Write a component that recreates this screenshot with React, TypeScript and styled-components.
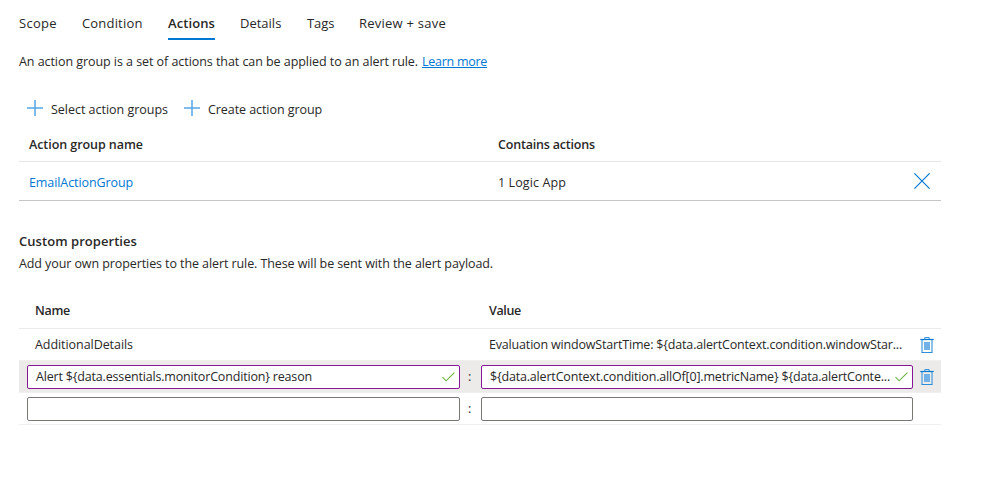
import React from 'react';
import styled, { createGlobalStyle } from 'styled-components';

const GlobalStyle = createGlobalStyle`
  * { box-sizing: border-box; }
  body {
    margin: 0;
    background: #fff;
    color: #292827;
    font: 12.5px/18px 'Open Sans', 'Noto Sans', sans-serif;
  }
`;

const Page = styled.main`
  width: 922px;
  margin-left: 19px;
  padding-top: 11px;
`;

const Text = styled.span<{ $spacing?: number }>`
  letter-spacing: ${({ $spacing = 0 }) => $spacing}px;
  white-space: pre;
`;

const Tabs = styled.nav`
  display: flex;
  height: 29px;
`;

const Tab = styled.button<{ $active?: boolean; $width: number; $spacing: number }>`
  width: ${({ $width }) => $width}px;
  margin: 0 25px 0 0;
  padding: 0 0 3px;
  border: 0;
  border-bottom: 2px solid ${({ $active }) => ($active ? '#0078d4' : 'transparent')};
  background: none;
  color: inherit;
  font: ${({ $active }) => ($active ? 600 : 400)} 13px/24px 'Open Sans', sans-serif;
  letter-spacing: ${({ $spacing }) => $spacing}px;
  text-align: left;
  white-space: nowrap;
`;

const Intro = styled.p`
  margin: 13px 0 0;
  display: flex;
  gap: 4px;
`;

const Link = styled.a<{ $spacing: number; $underline?: boolean }>`
  color: #0078d4;
  letter-spacing: ${({ $spacing }) => $spacing}px;
  text-decoration: ${({ $underline }) => ($underline ? 'underline' : 'none')};
  text-underline-offset: 1px;
`;

const Toolbar = styled.div`
  display: flex;
  gap: 16px;
  margin-top: 29px;
  padding-left: 8px;
`;

const Command = styled.button`
  display: flex;
  gap: 8px;
  padding: 0;
  border: 0;
  background: none;
  color: inherit;
  font: inherit;
`;

const CommandLabel = styled(Text)`
  padding-top: 1px;
`;

const GroupRow = styled.div<{ $header?: boolean }>`
  display: grid;
  grid-template-columns: 469px 1fr 16px;
  align-items: center;
  height: ${({ $header }) => ($header ? 33 : 39)}px;
  margin-top: ${({ $header }) => ($header ? 10 : 0)}px;
  padding: ${({ $header }) => ($header ? '0 11px 0 10px' : '4px 11px 0 10px')};
  border-bottom: 1px solid ${({ $header }) => ($header ? '#e6e6e6' : '#c8c6c4')};
  font-weight: ${({ $header }) => ($header ? 600 : 400)};
`;

const IconButton = styled.button`
  display: flex;
  padding: 0;
  border: 0;
  background: none;
`;

const RemoveButton = styled(IconButton)`
  margin-top: -4px;
`;

const Heading = styled.h2`
  margin: 31px 0 0;
  font-size: 13px;
  font-weight: 600;
  line-height: 18px;
`;

const Description = styled.p`
  margin: 5px 0 0;
`;

const PropertyHeader = styled.div`
  display: grid;
  grid-template-columns: 454px 1fr;
  align-items: center;
  height: 36px;
  margin-top: 20px;
  padding-left: 16px;
  border-bottom: 1px solid #eaeaea;
  font-weight: 600;
`;

const PropertyRow = styled.div<{ $selected?: boolean }>`
  display: grid;
  grid-template-columns: 433px 21px 432px 1fr;
  align-items: center;
  height: 32px;
  padding-left: 8px;
  border-bottom: 1px solid #f0efee;
  background: ${({ $selected }) => ($selected ? '#edebe9' : '#fff')};
`;

const Cell = styled.div`
  padding-left: 8px;
`;

const Separator = styled.span`
  padding-left: 8px;
`;

const Field = styled.div<{ $edited?: boolean }>`
  display: flex;
  align-items: center;
  justify-content: space-between;
  height: 24px;
  margin-top: 1px;
  padding: 0 4px 0 8px;
  border: 1px solid ${({ $edited }) => ($edited ? '#881798' : '#7a7875')};
  border-radius: 2px;
  background: #fff;
`;

const DeleteButton = styled(IconButton)`
  margin: 1px 0 0 7px;
`;

const PlusIcon = () => (
  <svg width="16" height="16" viewBox="0 0 16 16">
    <path d="M8 0v16M0 8h16" stroke="#55a6e6" strokeWidth="1.5" />
  </svg>
);

const CloseIcon = () => (
  <svg width="16" height="16" viewBox="0 0 16 16" fill="none">
    <path d="M.4.4l15.2 15.2M15.6.4L.4 15.6" stroke="#0078d4" strokeWidth="1.2" />
  </svg>
);

const CheckIcon = () => (
  <svg width="13" height="10" viewBox="0 0 13 10" fill="none">
    <path d="M.5 5.2l3.6 3.6L12.4.7" stroke="#6bb244" strokeWidth="1.1" />
  </svg>
);

const TrashIcon = () => (
  <svg width="14" height="16" viewBox="0 0 14 16" fill="none">
    <path d="M2 3v12.5M12 3v12.5" stroke="#3f9ae0" strokeWidth="1.2" />
    <path d="M1.5 15.5h11" stroke="#2a8edb" />
    <path d="M4.8 2V.6h4.4V2" stroke="#2a8edb" />
    <path d="M.3 2.5h13.4" stroke="#0078d4" strokeWidth="1.2" />
    <path d="M4 5h6v8H4z" fill="#71b1e6" />
  </svg>
);

const tabs = [
  { label: 'Scope', width: 38, spacing: 0.3 },
  { label: 'Condition', width: 61, spacing: 0.18 },
  { label: 'Actions', width: 47, spacing: 0.1, active: true },
  { label: 'Details', width: 42, spacing: 0 },
  { label: 'Tags', width: 27, spacing: -0.1 },
  { label: 'Review + save', width: 88, spacing: 0.24 },
];

export default function App() {
  return (
    <>
      <GlobalStyle />
      <Page>
        <Tabs>
          {tabs.map((t) => (
            <Tab key={t.label} $active={t.active} $width={t.width} $spacing={t.spacing}>
              {t.label}
            </Tab>
          ))}
        </Tabs>
        <Intro>
          <Text $spacing={-0.056}>An action group is a set of actions that can be applied to an alert rule.</Text>
          <Link $spacing={-0.27} $underline>Learn more</Link>
        </Intro>
        <Toolbar>
          <Command>
            <PlusIcon />
            <CommandLabel $spacing={-0.02}>Select action groups</CommandLabel>
          </Command>
          <Command>
            <PlusIcon />
            <CommandLabel $spacing={-0.07}>Create action group</CommandLabel>
          </Command>
        </Toolbar>

        <GroupRow $header>
          <Text $spacing={-0.06}>Action group name</Text>
          <Text $spacing={-0.19}>Contains actions</Text>
        </GroupRow>
        <GroupRow>
          <Link $spacing={-0.09}>EmailActionGroup</Link>
          <Text $spacing={0.1}>1 Logic App</Text>
          <RemoveButton aria-label="Remove">
            <CloseIcon />
          </RemoveButton>
        </GroupRow>

        <Heading>
          <Text $spacing={0.05}>Custom properties</Text>
        </Heading>
        <Description>
          <Text $spacing={-0.09}>
            Add your own properties to the alert rule. These will be sent with the alert payload.
          </Text>
        </Description>

        <PropertyHeader>
          <Text $spacing={-0.3}>Name</Text>
          <Text $spacing={-0.34}>Value</Text>
        </PropertyHeader>
        <PropertyRow>
          <Cell>
            <Text $spacing={-0.06}>AdditionalDetails</Text>
          </Cell>
          <span />
          <Cell>
            <Text $spacing={-0.176}>
              {'Evaluation windowStartTime: ${data.alertContext.condition.windowStar...'}
            </Text>
          </Cell>
          <DeleteButton aria-label="Delete">
            <TrashIcon />
          </DeleteButton>
        </PropertyRow>
        <PropertyRow $selected>
          <Field $edited>
            <Text $spacing={-0.175}>{'Alert ${data.essentials.monitorCondition} reason'}</Text>
            <CheckIcon />
          </Field>
          <Separator>:</Separator>
          <Field $edited>
            <Text $spacing={-0.18}>
              {'${data.alertContext.condition.allOf[0].metricName} ${data.alertConte...'}
            </Text>
            <CheckIcon />
          </Field>
          <DeleteButton aria-label="Delete">
            <TrashIcon />
          </DeleteButton>
        </PropertyRow>
        <PropertyRow>
          <Field />
          <Separator>:</Separator>
          <Field />
        </PropertyRow>
      </Page>
    </>
  );
}
